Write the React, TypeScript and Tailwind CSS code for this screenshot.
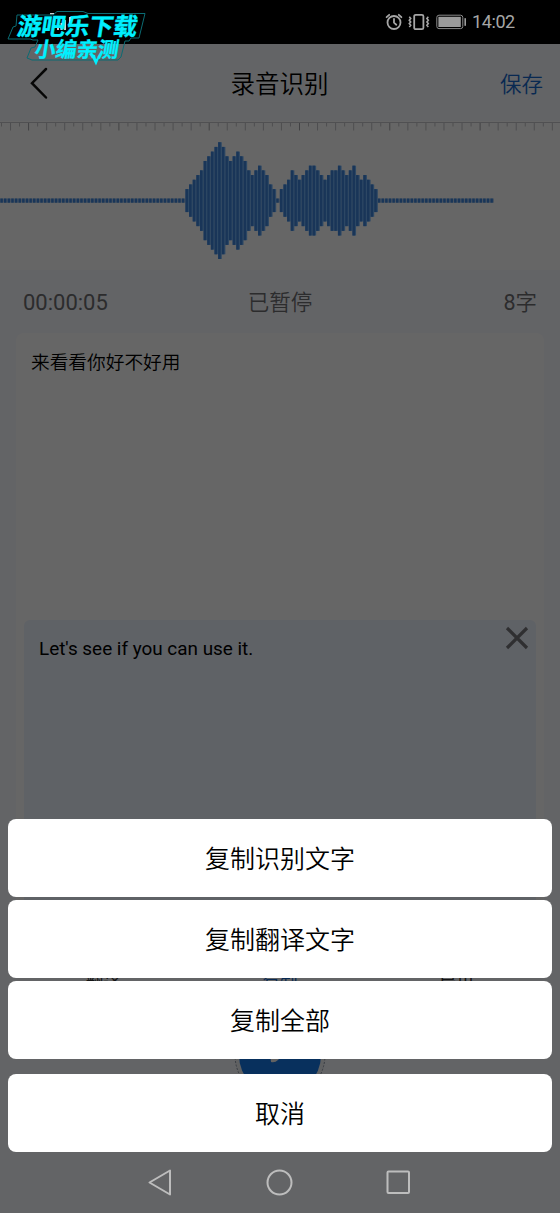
import React from 'react';

// Amplitude steps, one entry per bar
const SPEECH = [
  2, 3, 4, 5, 6, 8, 9, 10, 11, 12, 11, 9, 8, 9, 10, 9, 8, 6, 5, 6, 7, 6, 5, 3, 2,
  0,
  2, 3, 4, 6, 5, 4, 5, 6, 7, 7, 6, 5, 4, 5, 6, 6, 7, 6, 5, 6, 7, 5, 4, 5, 4, 3, 2,
];
const LEVELS = [...Array(52).fill(0), ...SPEECH, ...Array(32).fill(0)];
const BAR_STEP = 3.63;

const TOOLS = [
  { label: '翻译', active: false },
  { label: '复制', active: true },
  { label: '导出', active: false },
];

const ACTIONS = ['复制识别文字', '复制翻译文字', '复制全部'];

function StatusBar() {
  return (
    <div className="flex h-[44px] shrink-0 items-center justify-end bg-black pr-[45px] text-[#a6a6a6]">
      <svg width="18" height="18" viewBox="0 0 18 18" fill="none" stroke="currentColor" strokeWidth="1.8" strokeLinecap="round" className="mr-[5px]">
        <circle cx="9" cy="9.5" r="6.5" />
        <path d="M9 6v3.7l2.3 2M1.6 4.2 4.2 1.8M16.4 4.2l-2.6-2.4" />
      </svg>
      <svg width="22" height="18" viewBox="0 0 22 18" fill="none" stroke="currentColor" strokeWidth="1.8" className="mr-[6px]">
        <rect x="6.2" y="1.8" width="9.2" height="14.4" rx="1.5" />
        <path strokeWidth="1.6" d="M1.3 3.8l1.4 1.7-1.4 1.7 1.4 1.7-1.4 1.7 1.4 1.7-1.4 1.7M20.3 3.8l-1.4 1.7 1.4 1.7-1.4 1.7 1.4 1.7-1.4 1.7 1.4 1.7" />
      </svg>
      <svg width="31" height="16" viewBox="0 0 31 16" className="mr-[5px]">
        <rect x="0.8" y="1.2" width="26" height="13.4" rx="2.2" fill="none" stroke="#8a8a8a" strokeWidth="1" />
        <rect x="2.4" y="2.8" width="22.4" height="10.2" fill="#9c9c9c" />
        <rect x="28.4" y="4.2" width="1.6" height="7.6" fill="#9c9c9c" />
      </svg>
      <span className="w-[43px] whitespace-nowrap text-[18px] leading-none tracking-[-0.4px]">14:02</span>
    </div>
  );
}

function Watermark() {
  return (
    <div className="absolute left-0 top-0 z-20 h-[70px] w-[160px]">
      <svg width="160" height="70" viewBox="0 0 160 70" fill="none" className="absolute inset-0">
        <g fill="#d0d0d0">
          <rect x="57" y="26" width="2" height="4" />
          <rect x="60.5" y="23" width="2" height="7" />
          <rect x="64" y="20" width="2" height="10" />
          <rect x="69" y="17" width="2" height="7" />
          <rect x="50" y="13" width="4" height="1.5" />
        </g>
        <path
          d="M17 15h36l4-3.500h26l5 2h57l-6 24.500h-8l-2 3h-4l-4 16-3 3H32l-5-2 4-10 4-1 3-7h-5l-3-1H8l5-12 3-1z"
          stroke="#0b6b73"
        />
        <path d="M91 55h4l1 4 4-3-4 9.500z" fill="#00f0ff" />
      </svg>
      <div className="relative flex -skew-x-[9deg] flex-col font-bold leading-none text-[#00f0ff]">
        <span className="whitespace-nowrap pl-[17px] pt-[15px] text-[24px] [-webkit-text-stroke:0.4px_#00f0ff]">游吧乐下载</span>
        <span className="whitespace-nowrap pl-[38px] pt-[1px] text-[21px] [-webkit-text-stroke:0.3px_#00f0ff]">小编亲测</span>
      </div>
    </div>
  );
}

function Waveform() {
  return (
    <svg width="560" height="149" viewBox="0 0 560 149" className="block bg-white">
      <path d="M0 1.5h560" stroke="#c8c8cc" />
      {Array.from({ length: 63 }, (_, i) => {
        const x = 1 + i * 9.03;
        const major = i % 2 === 1;
        const labelled = i % 10 === 3;
        return <rect key={i} x={x} y="2" width="1" height={major ? 7.5 : 3.5} fill={labelled ? '#a4a4a8' : '#c2c2c6'} />;
      })}
      {LEVELS.map((level, i) => {
        const x = -3.3 + i * BAR_STEP;
        const half = 2.1 + level * 4.69;
        return (
          <g key={i}>
            <rect x={x} y={79.6 - half} width={BAR_STEP} height={half * 2} fill={level ? '#72b4fa' : '#b4cdec'} />
            <rect x={x} y={79.6 - half} width="2.5" height={half * 2} fill="#3f86dc" />
          </g>
        );
      })}
    </svg>
  );
}

function RecordPage() {
  return (
    <div className="flex flex-1 flex-col bg-[#f8fafe]">
      <header className="grid h-[77px] grid-cols-[1fr_auto_1fr] items-center pl-[29px] pr-[17px] pt-[3px]">
        <svg width="44" height="36" viewBox="0 0 44 36" fill="none" stroke="#111" strokeWidth="2.5" strokeLinecap="round">
          <path d="M17 3 3 17.2 17 31.5" />
        </svg>
        <h1 className="mr-[13px] pt-[3px] text-[24.5px] font-[350] leading-none text-black">录音识别</h1>
        <button className="justify-self-end pt-[2px] text-[21.5px] font-[350] leading-none text-[#1668cc]">保存</button>
      </header>

      <Waveform />

      <div className="grid h-[63px] grid-cols-3 items-center px-[23px] pt-[2px] text-[21.5px] font-[350] leading-none text-[#6e6e72]">
        <span className="text-[22px] font-normal">00:00:05</span>
        <span className="text-center">已暂停</span>
        <span className="text-right">
          <span className="font-normal">8</span>字
        </span>
      </div>

      <div className="mx-[16px] flex h-[597px] flex-col rounded-[8px] bg-white">
        <p className="h-[287px] px-[15px] pt-[20px] text-[18.7px] font-[350] leading-[20px] text-black">来看看你好不好用</p>
        <div className="mx-[8px] flex flex-1 items-start justify-between rounded-[6px] bg-[#edf4ff] pl-[15px] pr-[7px]">
          <p className="pt-[18px] text-[18.9px] leading-[22px] text-black">Let's see if you can use it.</p>
          <svg width="24" height="24" viewBox="0 0 24 24" fill="none" stroke="#77777a" strokeWidth="3.2" className="mt-[6px]">
            <path d="M2 2l20 20M22 2 2 22" />
          </svg>
        </div>
      </div>

      <div className="mt-[44px] grid grid-cols-3 px-[15px]">
        {TOOLS.map((tool) => (
          <span key={tool.label} className={`text-center text-[17.5px] leading-[20px] ${tool.active ? 'text-[#1668cc]' : 'text-[#333]'}`}>
            {tool.label}
          </span>
        ))}
      </div>

      <svg width="96" height="96" viewBox="0 0 96 96" className="mx-auto mt-[13px]">
        <circle cx="48" cy="48" r="45" fill="#f0f2f6" stroke="#8e98a8" strokeDasharray="2 1.5" />
        <circle cx="48" cy="48" r="41" fill="#1678e8" />
        <path d="M36 30l22 10-12 13q-3 3-7 2z" fill="#f4f4f4" />
      </svg>
    </div>
  );
}

function ActionSheet() {
  return (
    <div className="flex flex-1 flex-col justify-end px-[8px] text-[25px] font-[350] leading-none text-black">
      <div className="flex flex-col gap-[3px]">
        {ACTIONS.map((action) => (
          <button key={action} className="h-[78px] rounded-[8px] bg-white pt-[3px]">
            {action}
          </button>
        ))}
      </div>
      <button className="mt-[15px] h-[78px] rounded-[8px] bg-white pt-[3px]">取消</button>
    </div>
  );
}

function NavBar() {
  return (
    <nav className="flex h-[61px] shrink-0 items-center justify-center gap-[92px] pr-[1px]">
      <svg width="27" height="28" viewBox="0 0 27 28" fill="none" stroke="#bdbdbd" strokeWidth="2" strokeLinejoin="round">
        <path d="M2.5 13.5 23 1.5v24z" />
      </svg>
      <svg width="27" height="28" viewBox="0 0 27 28" fill="none" stroke="#bdbdbd" strokeWidth="2">
        <circle cx="13.5" cy="13.5" r="12" />
      </svg>
      <svg width="27" height="28" viewBox="0 0 27 28" fill="none" stroke="#bdbdbd" strokeWidth="2">
        <rect x="2.5" y="2.5" width="21.5" height="21.5" rx="1" />
      </svg>
    </nav>
  );
}

export default function App() {
  return (
    <div className="relative flex h-[1213px] w-[560px] flex-col overflow-hidden font-['Roboto','Noto_Sans_CJK_SC',sans-serif]">
      <StatusBar />
      <RecordPage />
      <div className="absolute inset-x-0 bottom-0 top-[44px] z-10 flex flex-col bg-black/60">
        <ActionSheet />
        <NavBar />
      </div>
      <Watermark />
    </div>
  );
}
